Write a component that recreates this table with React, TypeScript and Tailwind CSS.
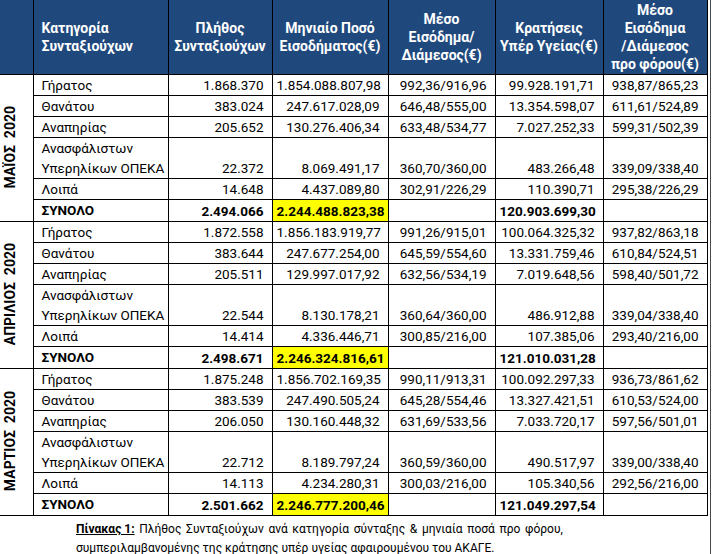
import React from 'react';

type Group = {
  label: string;
  rows: string[][];
  total: string[];
};

const groups: Group[] = [
  {
    label: 'ΜΑΪΟΣ  2020',
    rows: [
      ['Γήρατος', '1.868.370', '1.854.088.807,98', '992,36/916,96', '99.928.191,71', '938,87/865,23'],
      ['Θανάτου', '383.024', '247.617.028,09', '646,48/555,00', '13.354.598,07', '611,61/524,89'],
      ['Αναπηρίας', '205.652', '130.276.406,34', '633,48/534,77', '7.027.252,33', '599,31/502,39'],
      ['ΟΠΕΚΑ', '22.372', '8.069.491,17', '360,70/360,00', '483.266,48', '339,09/338,40'],
      ['Λοιπά', '14.648', '4.437.089,80', '302,91/226,29', '110.390,71', '295,38/226,29'],
    ],
    total: ['2.494.066', '2.244.488.823,38', '120.903.699,30'],
  },
  {
    label: 'ΑΠΡΙΛΙΟΣ  2020',
    rows: [
      ['Γήρατος', '1.872.558', '1.856.183.919,77', '991,26/915,01', '100.064.325,32', '937,82/863,18'],
      ['Θανάτου', '383.644', '247.677.254,00', '645,59/554,60', '13.331.759,46', '610,84/524,51'],
      ['Αναπηρίας', '205.511', '129.997.017,92', '632,56/534,19', '7.019.648,56', '598,40/501,72'],
      ['ΟΠΕΚΑ', '22.544', '8.130.178,21', '360,64/360,00', '486.912,88', '339,04/338,40'],
      ['Λοιπά', '14.414', '4.336.446,71', '300,85/216,00', '107.385,06', '293,40/216,00'],
    ],
    total: ['2.498.671', '2.246.324.816,61', '121.010.031,28'],
  },
  {
    label: 'ΜΑΡΤΙΟΣ  2020',
    rows: [
      ['Γήρατος', '1.875.248', '1.856.702.169,35', '990,11/913,31', '100.092.297,33', '936,73/861,62'],
      ['Θανάτου', '383.539', '247.490.505,24', '645,28/554,46', '13.327.421,51', '610,53/524,00'],
      ['Αναπηρίας', '206.050', '130.160.448,32', '631,69/533,56', '7.033.720,17', '597,56/501,01'],
      ['ΟΠΕΚΑ', '22.712', '8.189.797,24', '360,59/360,00', '490.517,97', '339,00/338,40'],
      ['Λοιπά', '14.113', '4.234.280,31', '300,03/216,00', '105.340,56', '292,56/216,00'],
    ],
    total: ['2.501.662', '2.246.777.200,46', '121.049.297,54'],
  },
];

const captionWords = 'Πλήθος Συνταξιούχων ανά κατηγορία σύνταξης & μηνιαία ποσά προ φόρου,'.split(' ');

const th = 'border-x border-black px-1 align-middle font-bold text-white text-[14px] leading-[18px]';
const td = 'border border-black pl-1 pr-2 py-0 text-right align-bottom leading-[20px] whitespace-nowrap';

function GroupRows({ group }: { group: Group }) {
  return (
    <>
      {group.rows.map((r, i) => {
        const opeka = r[0] === 'ΟΠΕΚΑ';
        return (
          <tr key={i} className={opeka ? 'h-[41px]' : 'h-[21px]'}>
            {i === 0 && (
              <td rowSpan={6} className="border-y border-r border-black p-0 align-middle">
                <div className="mx-auto rotate-180 whitespace-pre text-[14px] font-bold [writing-mode:vertical-rl]">
                  {group.label}
                </div>
              </td>
            )}
            <td className="whitespace-nowrap border border-black py-0 pl-2 pr-0 text-left align-top leading-[20px]">
              {opeka ? (
                <>
                  Ανασφάλιστων
                  <br />
                  Υπερηλίκων ΟΠΕΚΑ
                </>
              ) : (
                r[0]
              )}
            </td>
            {r.slice(1).map((v, j) => (
              <td key={j} className={td}>
                {v}
              </td>
            ))}
          </tr>
        );
      })}
      <tr className="h-[22px] font-bold">
        <td className="border border-black py-0 pl-2 text-left leading-[20px]">ΣΥΝΟΛΟ</td>
        <td className={td}>{group.total[0]}</td>
        <td className={td + ' bg-[#ffff00]'}>{group.total[1]}</td>
        <td className={td}></td>
        <td className={td}>{group.total[2]}</td>
        <td className={td}></td>
      </tr>
    </>
  );
}

export default function App() {
  return (
    <div className="flex h-[554px] w-[712px] overflow-hidden bg-white text-[13.5px] text-black [font-family:Roboto,'Noto_Sans',sans-serif]">
      <div className="w-[710px]">
        <table className="w-[707px] table-fixed border-collapse">
          <colgroup>
            <col className="w-[33px]" />
            <col className="w-[135px]" />
            <col className="w-[104px]" />
            <col className="w-[116px]" />
            <col className="w-[107px]" />
            <col className="w-[108px]" />
            <col className="w-[104px]" />
          </colgroup>
          <thead>
            <tr className="h-[74px] bg-[#1f497d]">
              <th className="border-r border-black"></th>
              <th className={th + ' pl-2 text-left'}>
                Κατηγορία
                <br />
                Συνταξιούχων
              </th>
              <th className={th}>
                Πλήθος
                <br />
                Συνταξιούχων
              </th>
              <th className={th}>
                Μηνιαίο Ποσό
                <br />
                Εισοδήματος(€)
              </th>
              <th className={th}>
                Μέσο
                <br />
                Εισόδημα/
                <br />
                Διάμεσος(€)
              </th>
              <th className={th}>
                Κρατήσεις
                <br />
                Υπέρ Υγείας(€)
              </th>
              <th className={th}>
                Μέσο
                <br />
                Εισόδημα
                <br />
                /Διάμεσος
                <br />
                προ φόρου(€)
              </th>
            </tr>
          </thead>
          <tbody>
            {groups.map((g) => (
              <GroupRows key={g.label} group={g} />
            ))}
          </tbody>
        </table>
        <div className="mt-[4px] pl-[76px] text-[12px] leading-[19px]">
          <div className="flex w-[487px] justify-between gap-x-[3px] whitespace-nowrap">
            <span className="font-bold underline">Πίνακας 1:</span>
            {captionWords.map((w, i) => (
              <span key={i}>{w}</span>
            ))}
          </div>
          <div className="whitespace-nowrap">συμπεριλαμβανομένης της κράτησης υπέρ υγείας αφαιρουμένου του ΑΚΑΓΕ.</div>
        </div>
      </div>
      <div className="w-px bg-[#4a4a4a]"></div>
      <div className="w-px"></div>
    </div>
  );
}
